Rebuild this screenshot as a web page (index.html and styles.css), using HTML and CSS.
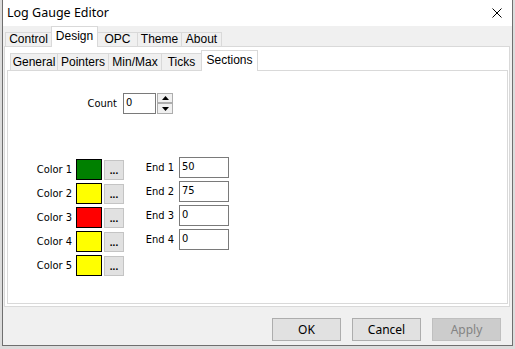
FILE: index.html
```html
<!DOCTYPE html>
<html lang="en">
<head>
  <meta charset="UTF-8">
  <title>Log Gauge Editor</title>
  <link rel="stylesheet" href="styles.css">
</head>
<body>

  <div class="window">
    <div class="titlebar">
      <span class="title">Log Gauge Editor</span>
      <svg class="close" width="10" height="10" viewBox="0 0 10 10">
        <path d="M0.5 0.5 L9.5 9.5 M9.5 0.5 L0.5 9.5" stroke="#000" stroke-width="1" fill="none"/>
      </svg>
    </div>

    <div class="client">
      <!-- outer tabs -->
      <div class="tabs outer-tabs">
        <div class="tab" style="width:47px">Control</div>
        <div class="tab active" style="width:47px">Design</div>
        <div class="tab" style="width:41px">OPC</div>
        <div class="tab" style="width:45px">Theme</div>
        <div class="tab" style="width:41px">About</div>
      </div>

      <div class="outer-panel">
        <!-- inner tabs -->
        <div class="tabs inner-tabs">
          <div class="tab" style="width:48px">General</div>
          <div class="tab" style="width:52px">Pointers</div>
          <div class="tab" style="width:54px">Min/Max</div>
          <div class="tab" style="width:41px">Ticks</div>
          <div class="tab active" style="width:57px">Sections</div>
        </div>

        <div class="inner-panel">
          <div class="count-row">
            <label class="count-label">Count</label>
            <div class="textbox count-box">0</div>
            <div class="spinner">
              <div class="spin-btn">
                <svg width="7" height="4" viewBox="0 0 7 4"><path d="M3.5 0 L7 4 L0 4 Z" fill="#000"/></svg>
              </div>
              <div class="spin-btn">
                <svg width="7" height="4" viewBox="0 0 7 4"><path d="M0 0 L7 0 L3.5 4 Z" fill="#000"/></svg>
              </div>
            </div>
          </div>

          <div class="sections">
            <div class="colors">
              <div class="row">
                <label class="color-label">Color 1</label>
                <div class="swatch green"></div>
                <div class="dots">...</div>
              </div>
              <div class="row">
                <label class="color-label">Color 2</label>
                <div class="swatch yellow"></div>
                <div class="dots">...</div>
              </div>
              <div class="row">
                <label class="color-label">Color 3</label>
                <div class="swatch red"></div>
                <div class="dots">...</div>
              </div>
              <div class="row">
                <label class="color-label">Color 4</label>
                <div class="swatch yellow"></div>
                <div class="dots">...</div>
              </div>
              <div class="row">
                <label class="color-label">Color 5</label>
                <div class="swatch yellow"></div>
                <div class="dots">...</div>
              </div>
            </div>

            <div class="ends">
              <div class="row">
                <label class="end-label">End 1</label>
                <div class="textbox end-box">50</div>
              </div>
              <div class="row">
                <label class="end-label">End 2</label>
                <div class="textbox end-box">75</div>
              </div>
              <div class="row">
                <label class="end-label">End 3</label>
                <div class="textbox end-box">0</div>
              </div>
              <div class="row">
                <label class="end-label">End 4</label>
                <div class="textbox end-box">0</div>
              </div>
            </div>
          </div>
        </div>
      </div>

      <div class="buttons">
        <button class="btn">OK</button>
        <button class="btn">Cancel</button>
        <button class="btn disabled">Apply</button>
      </div>
    </div>
  </div>

</body>
</html>
```

FILE: styles.css
```css
body {
  margin: 0;
  padding: 0 0 0 2px;
  background-color: #dcdcdc;
  font-family: "Noto Sans", Arial, sans-serif;
  font-size: 12px;
  color: #000;
}

.window {
  width: 509px;
  height: 345px;
  border: 1px solid #6f6f6f;
  border-top: none;
  background-color: #f0f0f0;
  display: flex;
  flex-direction: column;
}

/* Title bar */
.titlebar {
  height: 26px;
  background-color: #fff;
  display: flex;
  align-items: center;
  justify-content: space-between;
  padding: 0 10px 0 4px;
}

.title {
  font-size: 12.5px;
  margin-top: -1px;
}

.close {
  display: block;
  margin-top: -1px;
}

.client {
  flex: 1;
  padding: 0 2px 0 1px;
}

/* Tabs */
.tabs {
  display: flex;
  align-items: flex-end;
  font-family: "Liberation Sans", Arial, sans-serif;
  font-size: 12px;
}

.tab {
  box-sizing: border-box;
  border: 1px solid #d9d9d9;
  border-bottom: none;
  background-color: #f0f0f0;
  margin-right: -1px;
  text-align: center;
  line-height: 13px;
  white-space: nowrap;
}

.tab.active {
  background-color: #fff;
  margin-bottom: -1px;
  position: relative;
  z-index: 1;
}

.outer-tabs {
  height: 20px;
  padding-left: 1px;
}

.outer-tabs .tab {
  height: 14px;
  padding-top: 0;
}

.outer-tabs .tab.active {
  height: 21px;
  padding-top: 3px;
}

.outer-panel {
  box-sizing: border-box;
  height: 261px;
  border: 1px solid #d9d9d9;
  background-color: #fff;
  padding: 0 1px 2px 2px;
  display: flex;
  flex-direction: column;
}

.inner-tabs {
  height: 23px;
  padding-left: 3px;
}

.inner-tabs .tab {
  height: 17px;
  padding-top: 2px;
}

.inner-tabs .tab.active {
  height: 21px;
  padding-top: 3px;
}

.inner-panel {
  flex: 1;
  border: 1px solid #d9d9d9;
  background-color: #fff;
  padding-top: 22px;
  font-family: "DejaVu Sans Condensed", "DejaVu Sans", sans-serif;
  font-size: 11px;
}

/* Count spinner */
.count-row {
  display: flex;
  align-items: center;
  padding-left: 69px;
}

.count-label {
  width: 40px;
  text-align: right;
  margin-right: 6px;
}

.textbox {
  box-sizing: border-box;
  height: 21px;
  border: 1px solid #7a7a7a;
  background-color: #fff;
  padding-left: 2px;
  line-height: 18px;
}

.count-box {
  width: 33px;
}

.spinner {
  display: flex;
  flex-direction: column;
  margin-left: 1px;
  height: 21px;
}

.spin-btn {
  box-sizing: border-box;
  width: 16px;
  height: 10px;
  border: 1px solid #adadad;
  background-color: #f0f0f0;
  display: flex;
  align-items: center;
  justify-content: center;
}

.spin-btn + .spin-btn {
  height: 11px;
}

.spin-btn svg {
  display: block;
}

/* Sections grid */
.sections {
  display: flex;
  margin-top: 43px;
}

.colors {
  display: flex;
  flex-direction: column;
  gap: 3px;
  padding: 2px 0 0 24px;
}

.ends {
  display: flex;
  flex-direction: column;
  gap: 3px;
  padding-left: 19px;
}

.row {
  display: flex;
  align-items: center;
  height: 21px;
}

.color-label {
  width: 40px;
  text-align: right;
  margin-right: 4px;
}

.swatch {
  box-sizing: border-box;
  width: 26px;
  height: 21px;
  border: 1px solid #000;
}

.green { background-color: #008000; }
.yellow { background-color: #ffff00; }
.red { background-color: #ff0000; }

.dots {
  box-sizing: border-box;
  width: 20px;
  height: 20px;
  margin-left: 2px;
  border: 1px solid #c4c4c4;
  background-color: #e1e1e1;
  font-family: Arial, sans-serif;
  font-weight: bold;
  font-size: 10px;
  text-align: center;
  line-height: 20px;
}

.end-label {
  width: 31px;
  text-align: right;
  margin-right: 5px;
}

.end-box {
  width: 50px;
}

/* Dialog buttons */
.buttons {
  display: flex;
  justify-content: flex-end;
  gap: 11px;
  margin-top: 11px;
  padding-right: 9px;
}

.btn {
  box-sizing: border-box;
  width: 69px;
  height: 23px;
  border: 1px solid #adadad;
  background-color: #e1e1e1;
  font-family: "Noto Sans", Arial, sans-serif;
  font-size: 12px;
  color: #000;
  padding: 0;
}

.btn.disabled {
  background-color: #cccccc;
  border-color: #bfbfbf;
  color: #838383;
}
```
